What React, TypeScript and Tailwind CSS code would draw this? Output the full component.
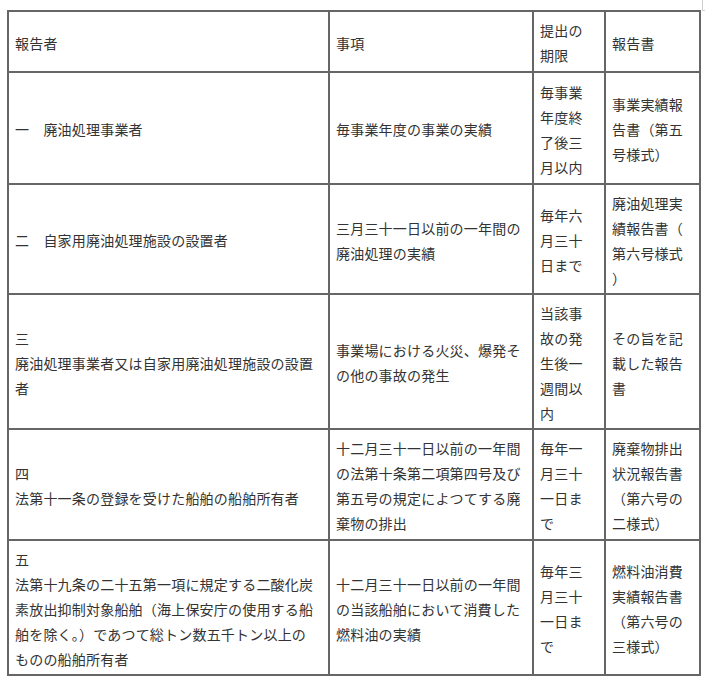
type Row = string[][]

// each cell is given line by line, as the page wraps it
const rows: Row[] = [
  [["報告者"], ["事項"], ["提出の", "期限"], ["報告書"]],
  [
    ["一　廃油処理事業者"],
    ["毎事業年度の事業の実績"],
    ["毎事業", "年度終", "了後三", "月以内"],
    ["事業実績報", "告書（第五", "号様式）"],
  ],
  [
    ["二　自家用廃油処理施設の設置者"],
    ["三月三十一日以前の一年間の", "廃油処理の実績"],
    ["毎年六", "月三十", "日まで"],
    ["廃油処理実", "績報告書（", "第六号様式", "）"],
  ],
  [
    ["三", "廃油処理事業者又は自家用廃油処理施設の設置", "者"],
    ["事業場における火災、爆発そ", "の他の事故の発生"],
    ["当該事", "故の発", "生後一", "週間以", "内"],
    ["その旨を記", "載した報告", "書"],
  ],
  [
    ["四", "法第十一条の登録を受けた船舶の船舶所有者"],
    ["十二月三十一日以前の一年間", "の法第十条第二項第四号及び", "第五号の規定によつてする廃", "棄物の排出"],
    ["毎年一", "月三十", "一日ま", "で"],
    ["廃棄物排出", "状況報告書", "（第六号の", "二様式）"],
  ],
  [
    [
      "五",
      "法第十九条の二十五第一項に規定する二酸化炭",
      "素放出抑制対象船舶（海上保安庁の使用する船",
      "舶を除く。）であつて総トン数五千トン以上の",
      "ものの船舶所有者",
    ],
    ["十二月三十一日以前の一年間", "の当該船舶において消費した", "燃料油の実績"],
    ["毎年三", "月三十", "一日ま", "で"],
    ["燃料油消費", "実績報告書", "（第六号の", "三様式）"],
  ],
]

export default function App() {
  return (
    <div className="relative min-h-[685px] bg-white pl-[7px] pt-[10px] font-['Noto_Sans_CJK_JP','Noto_Sans',sans-serif] text-[14px] leading-[25px] tracking-[0.2px] text-[#333]">
      {/* edge of the next frame, peeking in at the corner */}
      <div className="absolute right-0 top-0 h-[11px] w-[3px] border-b border-l border-[#d0d0d0]" />
      <div className="grid w-[694px] grid-cols-[319px_202px_70px_93px] grid-rows-[59px_110px_108px_133px_109px_133px] gap-[2px] bg-[#666] p-[2px]">
        {rows.map((row, ri) =>
          row.map((cell, ci) => (
            <div key={`${ri}-${ci}`} className="flex items-center bg-white pl-[6px] pt-[3px]">
              <div>
                {cell.map((line, li) => (
                  <div key={li} className="whitespace-nowrap">
                    {line}
                  </div>
                ))}
              </div>
            </div>
          ))
        )}
      </div>
    </div>
  )
}
